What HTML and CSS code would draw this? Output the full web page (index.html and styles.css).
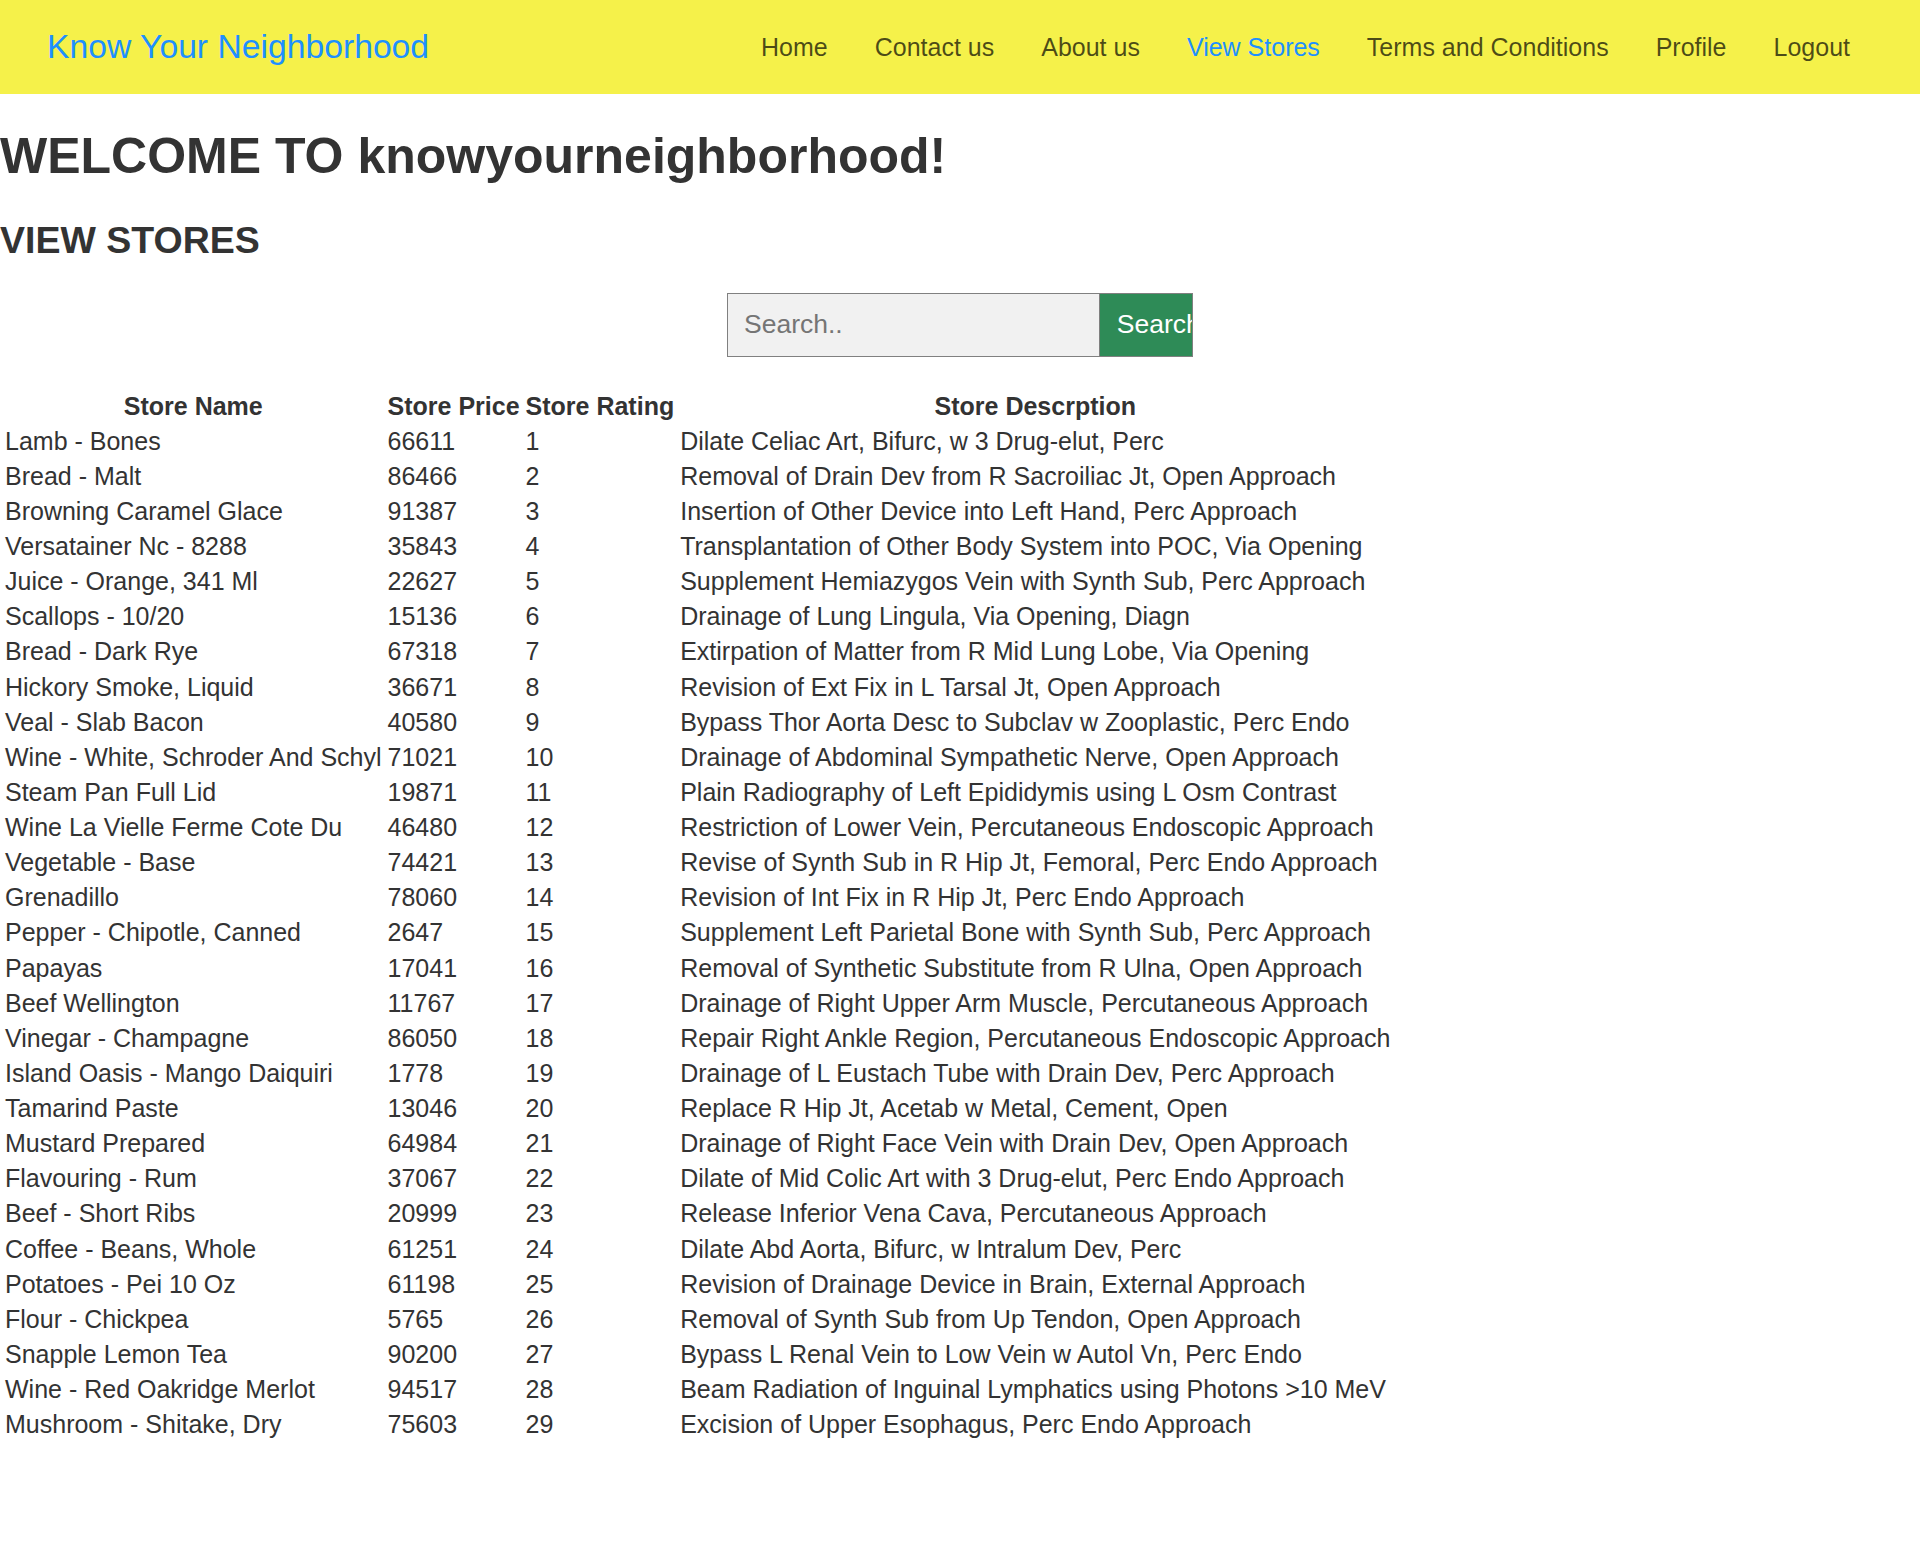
FILE: index.html
```html
<!DOCTYPE html>
<html lang="en">
<head>
<meta charset="utf-8">
<title>Know Your Neighborhood - View Stores</title>
<link rel="stylesheet" href="styles.css">
</head>
<body>
<header class="topbar">
  <a class="brand" href="#">Know Your Neighborhood</a>
  <nav class="nav">
    <a href="#">Home</a>
    <a href="#">Contact us</a>
    <a href="#">About us</a>
    <a href="#" class="active">View Stores</a>
    <a href="#">Terms and Conditions</a>
    <a href="#">Profile</a>
    <a href="#">Logout</a>
  </nav>
</header>
<main>
  <h1 class="welcome">WELCOME TO knowyourneighborhood!</h1>
  <h2 class="section">VIEW STORES</h2>
  <form class="search">
    <input type="text" class="search-input" placeholder="Search..">
    <button type="button" class="search-btn">Search</button>
  </form>
  <table class="stores">
    <thead>
      <tr><th>Store Name</th><th>Store Price</th><th>Store Rating</th><th>Store Descrption</th></tr>
    </thead>
    <tbody>
      <tr><td>Lamb - Bones</td><td>66611</td><td>1</td><td>Dilate Celiac Art, Bifurc, w 3 Drug-elut, Perc</td></tr>
      <tr><td>Bread - Malt</td><td>86466</td><td>2</td><td>Removal of Drain Dev from R Sacroiliac Jt, Open Approach</td></tr>
      <tr><td>Browning Caramel Glace</td><td>91387</td><td>3</td><td>Insertion of Other Device into Left Hand, Perc Approach</td></tr>
      <tr><td>Versatainer Nc - 8288</td><td>35843</td><td>4</td><td>Transplantation of Other Body System into POC, Via Opening</td></tr>
      <tr><td>Juice - Orange, 341 Ml</td><td>22627</td><td>5</td><td>Supplement Hemiazygos Vein with Synth Sub, Perc Approach</td></tr>
      <tr><td>Scallops - 10/20</td><td>15136</td><td>6</td><td>Drainage of Lung Lingula, Via Opening, Diagn</td></tr>
      <tr><td>Bread - Dark Rye</td><td>67318</td><td>7</td><td>Extirpation of Matter from R Mid Lung Lobe, Via Opening</td></tr>
      <tr><td>Hickory Smoke, Liquid</td><td>36671</td><td>8</td><td>Revision of Ext Fix in L Tarsal Jt, Open Approach</td></tr>
      <tr><td>Veal - Slab Bacon</td><td>40580</td><td>9</td><td>Bypass Thor Aorta Desc to Subclav w Zooplastic, Perc Endo</td></tr>
      <tr><td>Wine - White, Schroder And Schyl</td><td>71021</td><td>10</td><td>Drainage of Abdominal Sympathetic Nerve, Open Approach</td></tr>
      <tr><td>Steam Pan Full Lid</td><td>19871</td><td>11</td><td>Plain Radiography of Left Epididymis using L Osm Contrast</td></tr>
      <tr><td>Wine La Vielle Ferme Cote Du</td><td>46480</td><td>12</td><td>Restriction of Lower Vein, Percutaneous Endoscopic Approach</td></tr>
      <tr><td>Vegetable - Base</td><td>74421</td><td>13</td><td>Revise of Synth Sub in R Hip Jt, Femoral, Perc Endo Approach</td></tr>
      <tr><td>Grenadillo</td><td>78060</td><td>14</td><td>Revision of Int Fix in R Hip Jt, Perc Endo Approach</td></tr>
      <tr><td>Pepper - Chipotle, Canned</td><td>2647</td><td>15</td><td>Supplement Left Parietal Bone with Synth Sub, Perc Approach</td></tr>
      <tr><td>Papayas</td><td>17041</td><td>16</td><td>Removal of Synthetic Substitute from R Ulna, Open Approach</td></tr>
      <tr><td>Beef Wellington</td><td>11767</td><td>17</td><td>Drainage of Right Upper Arm Muscle, Percutaneous Approach</td></tr>
      <tr><td>Vinegar - Champagne</td><td>86050</td><td>18</td><td>Repair Right Ankle Region, Percutaneous Endoscopic Approach</td></tr>
      <tr><td>Island Oasis - Mango Daiquiri</td><td>1778</td><td>19</td><td>Drainage of L Eustach Tube with Drain Dev, Perc Approach</td></tr>
      <tr><td>Tamarind Paste</td><td>13046</td><td>20</td><td>Replace R Hip Jt, Acetab w Metal, Cement, Open</td></tr>
      <tr><td>Mustard Prepared</td><td>64984</td><td>21</td><td>Drainage of Right Face Vein with Drain Dev, Open Approach</td></tr>
      <tr><td>Flavouring - Rum</td><td>37067</td><td>22</td><td>Dilate of Mid Colic Art with 3 Drug-elut, Perc Endo Approach</td></tr>
      <tr><td>Beef - Short Ribs</td><td>20999</td><td>23</td><td>Release Inferior Vena Cava, Percutaneous Approach</td></tr>
      <tr><td>Coffee - Beans, Whole</td><td>61251</td><td>24</td><td>Dilate Abd Aorta, Bifurc, w Intralum Dev, Perc</td></tr>
      <tr><td>Potatoes - Pei 10 Oz</td><td>61198</td><td>25</td><td>Revision of Drainage Device in Brain, External Approach</td></tr>
      <tr><td>Flour - Chickpea</td><td>5765</td><td>26</td><td>Removal of Synth Sub from Up Tendon, Open Approach</td></tr>
      <tr><td>Snapple Lemon Tea</td><td>90200</td><td>27</td><td>Bypass L Renal Vein to Low Vein w Autol Vn, Perc Endo</td></tr>
      <tr><td>Wine - Red Oakridge Merlot</td><td>94517</td><td>28</td><td>Beam Radiation of Inguinal Lymphatics using Photons &gt;10 MeV</td></tr>
      <tr><td>Mushroom - Shitake, Dry</td><td>75603</td><td>29</td><td>Excision of Upper Esophagus, Perc Endo Approach</td></tr>
    </tbody>
  </table>
</main>
</body>
</html>
```

FILE: styles.css
```css
html, body {
  margin: 0;
  padding: 0;
  background: #ffffff;
}

body {
  font-family: "Liberation Sans", Arial, sans-serif;
  color: #333333;
  font-size: 25px;
}

.topbar {
  height: 94px;
  background: #f5f14a;
  display: flex;
  align-items: center;
  justify-content: space-between;
  padding: 0 70px 0 47px;
}

.brand {
  font-size: 33.7px;
  color: #1e90ff;
  text-decoration: none;
  line-height: 1;
}

.nav {
  display: flex;
  gap: 47px;
}

.nav a {
  font-size: 25px;
  color: rgba(0, 0, 0, 0.7);
  text-decoration: none;
  line-height: 1;
}

.nav a.active {
  color: #1e90ff;
}

.welcome {
  font-size: 50px;
  font-weight: bold;
  line-height: 58px;
  margin: 33px 0 33.5px;
  color: #333333;
}

.section {
  font-size: 37.5px;
  font-weight: bold;
  line-height: 43px;
  margin: 0 0 31px;
  color: #333333;
}

.search {
  width: 466px;
  margin: 0 auto;
  display: flex;
}

.search-input {
  box-sizing: border-box;
  flex: 0 0 80%;
  width: 80%;
  height: 64px;
  border: 1px solid #808080;
  background: #f1f1f1;
  padding: 0 16px;
  font-family: "Liberation Sans", Arial, sans-serif;
  font-size: 26.5px;
  color: #333333;
  outline: none;
}

.search-input::placeholder {
  color: #757575;
}

.search-btn {
  box-sizing: border-box;
  flex: 0 0 20%;
  width: 20%;
  height: 64px;
  border: 1px solid #808080;
  border-left: none;
  background: #2e8b57;
  color: #ffffff;
  padding: 0 0 0 17px;
  text-align: left;
  white-space: nowrap;
  overflow: hidden;
  font-family: "Liberation Sans", Arial, sans-serif;
  font-size: 26.5px;
}

.stores {
  margin: 30.5px 0 0 1px;
  border-collapse: separate;
  border-spacing: 2px;
  color: #333333;
}

.stores th,
.stores td {
  padding: 2.5px 2px;
  line-height: 28.12px;
  font-size: 25px;
  white-space: nowrap;
}

.stores th {
  font-weight: bold;
  text-align: center;
}

.stores td {
  text-align: left;
}
```
